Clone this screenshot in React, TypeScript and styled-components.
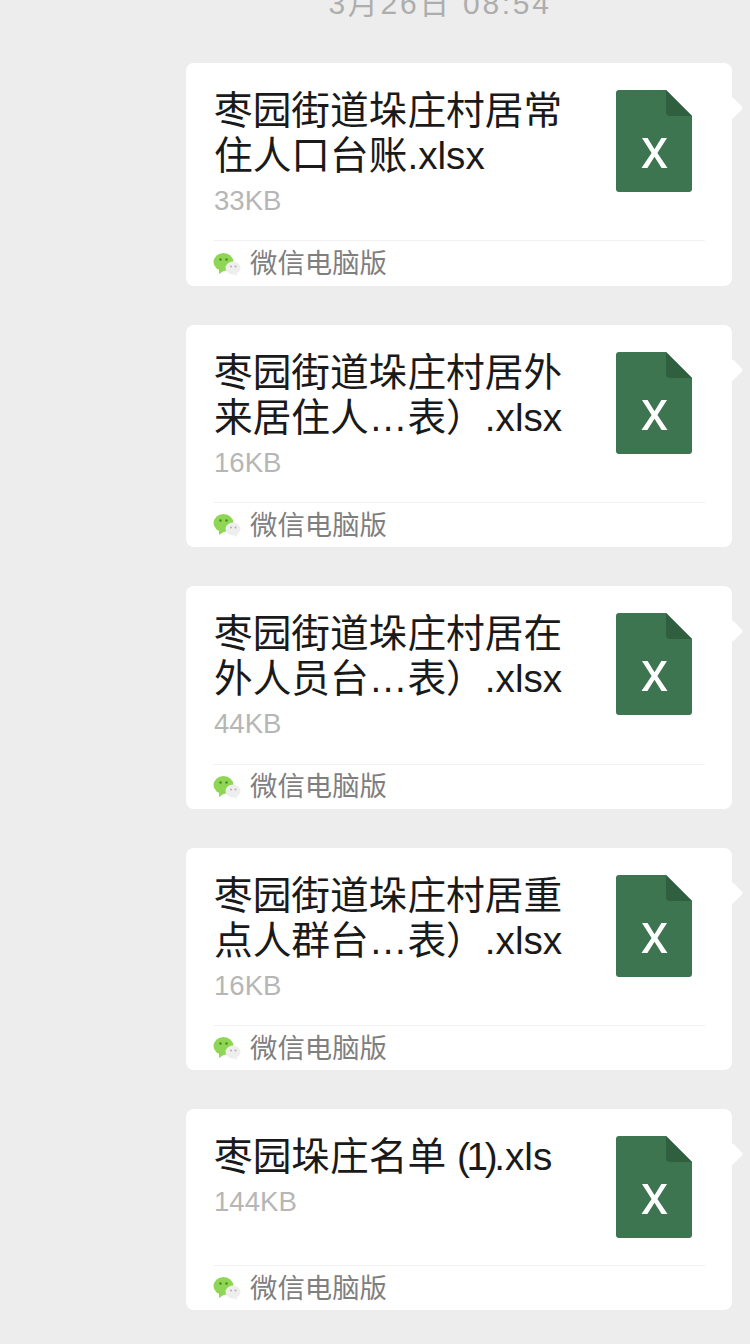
import React from 'react';
import styled, { createGlobalStyle } from 'styled-components';

const GlobalStyle = createGlobalStyle`
  html, body {
    margin: 0;
    padding: 0;
    background: #ededed;
  }
`;

const Page = styled.div`
  width: 750px;
  height: 1344px;
  overflow: hidden;
  background: #ededed;
  font-family: "Liberation Sans", "Noto Sans CJK SC", sans-serif;
  display: flex;
  flex-direction: column;
  align-items: center;
`;

const TimeLabel = styled.div`
  width: 100%;
  margin-top: -13px;
  padding-left: 130px;
  box-sizing: border-box;
  height: 33px;
  line-height: 33px;
  text-align: center;
  font-size: 30px;
  letter-spacing: 2.7px;
  color: #adadad;
  white-space: nowrap;
`;

const MessageList = styled.div`
  width: 100%;
  margin-top: 43px;
  padding: 0 18px 0 186px;
  box-sizing: border-box;
  display: flex;
  flex-direction: column;
  gap: 39px;
`;

const Bubble = styled.div<{ $short?: boolean }>`
  position: relative;
  height: ${(p) => (p.$short ? '201px' : '222.6px')};
  background: #fff;
  border-radius: 8px;
  padding: 25px 27px 0 28px;
  box-sizing: border-box;
  display: flex;
  flex-direction: column;

  &::after {
    content: '';
    position: absolute;
    right: -8px;
    top: 37px;
    width: 16px;
    height: 16px;
    background: #fff;
    transform: rotate(45deg);
    border-radius: 2px;
  }
`;

const FileRow = styled.div`
  display: flex;
  justify-content: space-between;
  flex: 1;
`;

const FileInfo = styled.div`
  width: 356px;
`;

const FileName = styled.div`
  font-size: 38.7px;
  line-height: 45px;
  color: #1a1a1a;
  white-space: nowrap;
`;

const NarrowDigits = styled.span`
  letter-spacing: -3.3px;
`;

const FileSize = styled.div`
  margin-top: 8px;
  font-size: 27.6px;
  line-height: 30px;
  color: #b6b6b6;
`;

const IconBox = styled.svg`
  display: block;
  width: 76px;
  height: 102px;
  margin: 2px 13px 0 0;
  flex: none;
`;

const Footer = styled.div`
  height: 45.2px;
  box-sizing: border-box;
  border-top: 1px solid #f1f1f1;
  display: flex;
  align-items: center;
  gap: 9px;
`;

const SourceName = styled.span`
  font-size: 27.4px;
  line-height: 45px;
  color: #7f7f7f;
`;

const LogoSvg = styled.svg`
  display: block;
  width: 28px;
  height: 24px;
  flex: none;
  margin-left: -1px;
`;

const ExcelIcon = () => (
  <IconBox viewBox="0 0 76 102">
    <path
      d="M3 0H50L76 26V99a3 3 0 0 1-3 3H3a3 3 0 0 1-3-3V3a3 3 0 0 1 3-3Z"
      fill="#3c7550"
    />
    <path d="M50 0L76 26H54a4 4 0 0 1-4-4Z" fill="#2f5f3e" />
    <path
      d="M26 48H31.6L38.5 59.3L45.4 48H51L41.4 63L51.5 78H45.6L38.5 66.8L31.4 78H25.5L35.6 63Z"
      fill="#fff"
    />
  </IconBox>
);

const WechatLogo = () => (
  <LogoSvg viewBox="0 0 28 24">
    <ellipse cx="10.5" cy="10" rx="10" ry="9" fill="#8ed653" />
    <path d="M6 16L6 22L12 18Z" fill="#8ed653" />
    <circle cx="7.5" cy="7.5" r="1.3" fill="#4d8a2c" />
    <circle cx="13.5" cy="7.5" r="1.3" fill="#4d8a2c" />
    <ellipse cx="20" cy="16" rx="7.5" ry="6.5" fill="#eeeeee" />
    <path d="M23 20L24.5 24L19 21.5Z" fill="#eeeeee" />
    <circle cx="18" cy="14.5" r="1" fill="#b0b0b0" />
    <circle cx="22.5" cy="14.5" r="1" fill="#b0b0b0" />
  </LogoSvg>
);

const files = [
  { lines: ['枣园街道垛庄村居常', '住人口台账.xlsx'], size: '33KB' },
  { lines: ['枣园街道垛庄村居外', '来居住人…表）.xlsx'], size: '16KB' },
  { lines: ['枣园街道垛庄村居在', '外人员台…表）.xlsx'], size: '44KB' },
  { lines: ['枣园街道垛庄村居重', '点人群台…表）.xlsx'], size: '16KB' },
];

export default function App() {
  return (
    <Page>
      <GlobalStyle />
      <TimeLabel>3月26日 08:54</TimeLabel>
      <MessageList>
        {files.map((file, i) => (
          <Bubble key={i}>
            <FileRow>
              <FileInfo>
                {file.lines.map((line) => (
                  <FileName key={line}>{line}</FileName>
                ))}
                <FileSize>{file.size}</FileSize>
              </FileInfo>
              <ExcelIcon />
            </FileRow>
            <Footer>
              <WechatLogo />
              <SourceName>微信电脑版</SourceName>
            </Footer>
          </Bubble>
        ))}
        <Bubble $short>
          <FileRow>
            <FileInfo>
              <FileName>
                枣园垛庄名单 <NarrowDigits>(1)</NarrowDigits>.xls
              </FileName>
              <FileSize>144KB</FileSize>
            </FileInfo>
            <ExcelIcon />
          </FileRow>
          <Footer>
            <WechatLogo />
            <SourceName>微信电脑版</SourceName>
          </Footer>
        </Bubble>
      </MessageList>
    </Page>
  );
}
